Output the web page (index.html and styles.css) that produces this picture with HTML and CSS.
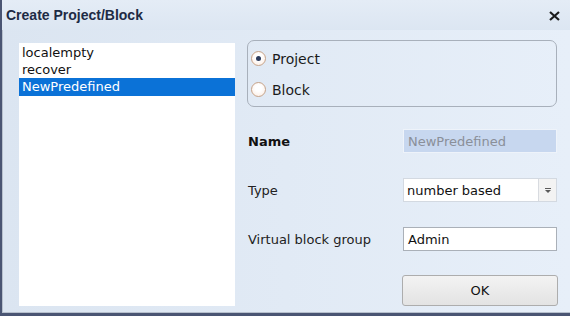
FILE: index.html
```html
<!DOCTYPE html>
<html lang="en">
<head>
    <meta charset="UTF-8">
    <meta name="viewport" content="width=device-width, initial-scale=1.0">
    <title>Create Project/Block</title>
    <link rel="stylesheet" href="styles.css">
</head>
<body>
    <div class="window">
        <div class="titlebar">
            <span class="title">Create Project/Block</span>
            <svg class="close" width="11" height="10" viewBox="0 0 11 10">
                <path d="M1 1 L10 9 M10 1 L1 9" stroke="#1c1c1c" stroke-width="2.2" fill="none"/>
            </svg>
        </div>

        <div class="content">
            <ul class="list">
                <li>localempty</li>
                <li>recover</li>
                <li class="selected">NewPredefined</li>
            </ul>

            <div class="side">
                <div class="group">
                    <label class="radio-row">
                        <span class="radio checked"></span>
                        Project
                    </label>
                    <label class="radio-row">
                        <span class="radio"></span>
                        Block
                    </label>
                </div>

                <div class="fields">
                    <span class="label bold">Name</span>
                    <div class="field disabled">NewPredefined</div>

                    <span class="label">Type</span>
                    <div class="field select">
                        <span class="select-text">number based</span>
                        <span class="select-btn">
                            <svg width="6" height="5" viewBox="0 0 6 5">
                                <rect x="0" y="0" width="6" height="1" fill="#5a5a5a"/>
                                <path d="M0 2 L6 2 L3 5 Z" fill="#5a5a5a"/>
                            </svg>
                        </span>
                    </div>

                    <span class="label">Virtual block group</span>
                    <div class="field text">Admin</div>

                    <span></span>
                    <button class="ok-btn" type="button">OK</button>
                </div>
            </div>
        </div>
    </div>
</body>
</html>
```

FILE: styles.css
```css
body {
    margin: 0;
    width: 570px;
    height: 316px;
    overflow: hidden;
    font-family: 'DejaVu Sans', sans-serif;
    font-size: 13px;
    color: #1b1b1b;
}

.window {
    height: 316px;
    box-sizing: border-box;
    border-left: 2px solid #4a5573;
    border-bottom: 3px solid #4a5573;
    box-shadow: inset 1px -1px 0 #b7c0cd;
    background: linear-gradient(to right, #dbe5f1, #e7eff9);
}

.titlebar {
    height: 30px;
    display: flex;
    align-items: center;
    justify-content: space-between;
    padding: 0 10px 0 4px;
    background: linear-gradient(to bottom, #e4ecf6, #dce6f2);
}

.title {
    font-family: 'Liberation Sans', Arial, sans-serif;
    font-weight: bold;
    font-size: 14px;
    color: #1e2b45;
}

.close {
    margin-top: 1px;
}

.content {
    display: flex;
    gap: 12px;
    padding: 10px 0 0 17px;
}

.list {
    list-style: none;
    margin: 3px 0 0 0;
    padding: 1px 0 0 0;
    width: 216px;
    height: 263px;
    box-sizing: border-box;
    background: #ffffff;
}

.list li {
    height: 17px;
    line-height: 17px;
    padding-left: 3px;
    color: #111;
}

.list li.selected {
    height: 18px;
    line-height: 18px;
    background: #0b72d7;
    color: #ffffff;
}

.side {
    width: 310px;
}

.group {
    height: 67px;
    box-sizing: border-box;
    border: 1px solid #a8b0bb;
    border-radius: 7px;
    padding: 2px 0 0 3px;
}

.radio-row {
    height: 31px;
    display: flex;
    align-items: center;
    gap: 6px;
    font-size: 14px;
    color: #1b1b1b;
}

.radio {
    width: 15px;
    height: 15px;
    box-sizing: border-box;
    border: 1px solid #c6a389;
    border-radius: 50%;
    background: radial-gradient(circle at 50% 40%, #ffffff 30%, #fbeadf 100%);
    display: flex;
    align-items: center;
    justify-content: center;
}

.radio.checked::after {
    content: "";
    width: 5px;
    height: 5px;
    border-radius: 50%;
    background: #2b3a5c;
}

.fields {
    display: grid;
    grid-template-columns: 155px 154px;
    grid-auto-rows: 24px;
    row-gap: 25px;
    margin-top: 22px;
    padding-left: 1px;
    align-items: center;
}

.fields .ok-btn {
    height: 31px;
    align-self: start;
    margin-top: -1px;
}

.label {
    color: #222;
}

.bold {
    font-weight: bold;
    color: #111;
}

.field {
    height: 24px;
    box-sizing: border-box;
    display: flex;
    align-items: center;
    padding-left: 4px;
}

.disabled {
    background: #c7d7ef;
    border: 1px solid #eef3fa;
    color: #8a8f99;
}

.select {
    background: #ffffff;
    border: 1px solid #d3d9e1;
    padding-left: 3px;
    justify-content: space-between;
}

.select-text {
    color: #111;
}

.select-btn {
    width: 18px;
    height: 100%;
    box-sizing: border-box;
    border-left: 1px solid #d8dbe0;
    background: #f3f3f3;
    display: flex;
    align-items: center;
    justify-content: center;
}

.text {
    background: #ffffff;
    border: 1px solid #aab0b8;
    color: #111;
}

.ok-btn {
    width: 156px;
    margin-left: -1px;
    font-family: 'DejaVu Sans', sans-serif;
    font-size: 13px;
    color: #111;
    border: 1px solid #adadad;
    border-radius: 3px;
    background: linear-gradient(to bottom, #f3f3f3, #e3e3e3);
    cursor: pointer;
}
```
